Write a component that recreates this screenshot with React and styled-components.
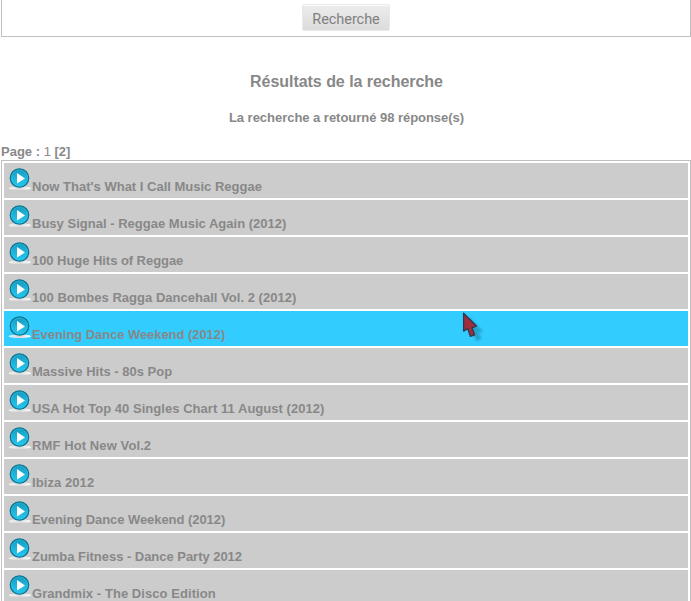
import React from "react";
import styled, { createGlobalStyle } from "styled-components";

const GlobalStyle = createGlobalStyle`
  * { box-sizing: border-box; }
  html, body { margin: 0; background: #fff; }
  body {
    height: 601px;
    overflow: hidden;
    color: #888;
    font: 13px/15px "Liberation Sans", Arial, sans-serif;
  }
`;

const Page = styled.main`
  position: relative;
  display: flex;
  flex-direction: column;
  width: 691px;
  height: 601px;
  padding-left: 1px;
  overflow: hidden;
`;

const SearchPanel = styled.section`
  display: flex;
  flex: none;
  justify-content: center;
  height: 37px;
  padding-top: 4px;
  border: solid #bfbfbf;
  border-width: 0 1px 1px;
`;

const SearchButton = styled.button`
  width: 88px;
  height: 27px;
  padding: 4px 0 0;
  border: 1px solid #e9e9e9;
  border-top-color: #ececec;
  border-radius: 2px;
  background: linear-gradient(#ececec, #dcdcdc);
  box-shadow: inset 0 1px 0 #fafafa;
  color: #808080;
  font: 14.5px/20px Roboto, sans-serif;
  letter-spacing: -0.05px;
`;

const Title = styled.h1`
  margin: 35px 0 0;
  padding-left: 1px;
  font-size: 16px;
  line-height: 20px;
  letter-spacing: -0.04px;
  text-align: center;
`;

const Summary = styled.h2`
  margin: 18px 0 0;
  padding-left: 1px;
  font-size: 13px;
  line-height: 15px;
  letter-spacing: -0.03px;
  text-align: center;
`;

const Pager = styled.nav`
  flex: none;
  height: 15px;
  margin-top: 19px;
  font-weight: bold;
`;

const CurrentPage = styled.span`
  font-weight: normal;
`;

const Results = styled.ul`
  display: flex;
  flex: none;
  flex-direction: column;
  gap: 2px;
  margin: 1px 0 0;
  padding: 2px;
  border: 1px solid #bfbfbf;
  list-style: none;
`;

const ResultRow = styled.li`
  display: flex;
  height: 35px;
  padding: 4px 4px 0;
  background: ${({ $active }) => ($active ? "#33ccff" : "#cccccc")};
  font-weight: bold;
`;

const ResultName = styled.span`
  padding-top: 12px;
  letter-spacing: ${({ $tracking }) => $tracking}px;
  white-space: nowrap;
`;

const PlayGraphic = styled.svg`
  flex: none;
  width: 24px;
  height: 24px;
`;

const Pointer = styled.svg`
  position: absolute;
  top: 310px;
  left: 460px;
  width: 28px;
  height: 34px;
`;

const results = [
  { name: "Now That's What I Call Music Reggae", tracking: 0 },
  { name: "Busy Signal - Reggae Music Again (2012)", tracking: 0.015 },
  { name: "100 Huge Hits of Reggae", tracking: -0.05 },
  { name: "100 Bombes Ragga Dancehall Vol. 2 (2012)", tracking: 0.02 },
  { name: "Evening Dance Weekend (2012)", tracking: -0.06, active: true },
  { name: "Massive Hits - 80s Pop", tracking: 0 },
  { name: "USA Hot Top 40 Singles Chart 11 August (2012)", tracking: 0.04 },
  { name: "RMF Hot New Vol.2", tracking: 0.1 },
  { name: "Ibiza 2012", tracking: 0.08 },
  { name: "Evening Dance Weekend (2012)", tracking: -0.06 },
  { name: "Zumba Fitness - Dance Party 2012", tracking: -0.03 },
  { name: "Grandmix - The Disco Edition", tracking: 0.06 },
];

function PlayIcon() {
  return (
    <PlayGraphic viewBox="0 0 24 24" aria-hidden="true">
      <ellipse cx="11.8" cy="21.3" rx="11.2" ry="1.7" fill="url(#floor)" />
      <circle cx="11.5" cy="11" r="9.2" fill="url(#disc)" stroke="#087391" strokeWidth="1.3" />
      <circle cx="11.5" cy="11" r="8.1" fill="none" stroke="#35bddd" strokeWidth=".6" />
      <path d="M9 6v10.6l8-5.1z" fill="#fff" />
    </PlayGraphic>
  );
}

export default function App() {
  return (
    <>
      <GlobalStyle />
      <Page>
        <SearchPanel>
          <SearchButton>Recherche</SearchButton>
        </SearchPanel>
        <Title>Résultats de la recherche</Title>
        <Summary>La recherche a retourné 98 réponse(s)</Summary>
        <Pager>
          Page : <CurrentPage>1</CurrentPage> [2]
        </Pager>
        <Results>
          {results.map(({ name, tracking, active }, index) => (
            <ResultRow key={index} $active={active}>
              <PlayIcon />
              <ResultName $tracking={tracking}>{name}</ResultName>
            </ResultRow>
          ))}
        </Results>
        <Pointer viewBox="0 0 28 34" aria-hidden="true">
          <defs>
            <linearGradient id="disc" x1="0" y1="0" x2="0" y2="1">
              <stop offset="0" stopColor="#1599bd" />
              <stop offset=".6" stopColor="#20b8e0" />
              <stop offset="1" stopColor="#25c8ee" />
            </linearGradient>
            <linearGradient id="floor">
              <stop offset="0" stopColor="#fff" stopOpacity=".75" />
              <stop offset=".5" stopColor="#d8d8d8" />
              <stop offset="1" stopColor="#fff" />
            </linearGradient>
            <filter id="soften">
              <feGaussianBlur stdDeviation="1.2" />
            </filter>
          </defs>
          <path d="M9 7v19l4-3 3.5 8 5-2-3-7h5z" fill="#16799c" opacity=".5" filter="url(#soften)" />
          <path
            d="M3.6 3.3V21.1l4.2-2.5 2.6 7.7 4.3-1.5-2.7-6.9 4.5-1.9z"
            fill="#9e2d3d"
            stroke="#333848"
            strokeWidth="1.3"
            strokeLinejoin="round"
          />
        </Pointer>
      </Page>
    </>
  );
}
